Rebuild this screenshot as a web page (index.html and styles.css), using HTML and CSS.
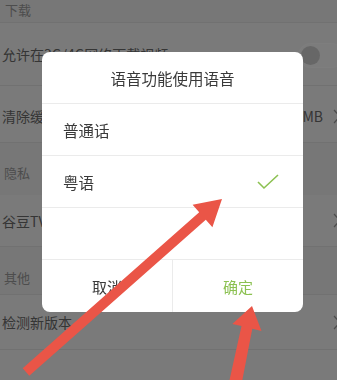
FILE: index.html
```html
<!DOCTYPE html>
<html lang="zh-CN">
<head>
  <meta charset="UTF-8">
  <meta name="viewport" content="width=device-width, initial-scale=1.0">
  <title>语音设置</title>
  <link rel="stylesheet" href="styles.css">
</head>
<body>
  <div class="settings">
    <div class="group-title group-first">下载</div>
    <div class="item item-tall">
      <span>允许在3G/4G网络下载视频</span>
      <span class="switch"><i></i></span>
    </div>
    <div class="item item-cache">
      <span>清除缓存</span>
      <span class="extra">23.6MB
        <svg class="chevron" viewBox="0 0 8 15"><polyline points="1,1 7,7.5 1,14" /></svg>
      </span>
    </div>
    <div class="group-title group-privacy">隐私</div>
    <div class="item">
      <span>谷豆TV隐私协议</span>
      <svg class="chevron" viewBox="0 0 8 15"><polyline points="1,1 7,7.5 1,14" /></svg>
    </div>
    <div class="group-title group-other">其他</div>
    <div class="item item-update">
      <span>检测新版本</span>
      <svg class="chevron" viewBox="0 0 8 15"><polyline points="1,1 7,7.5 1,14" /></svg>
    </div>
    <div class="item item-last"></div>
  </div>

  <div class="mask">
    <div class="dialog">
      <div class="dialog-title">语音功能使用语音</div>
      <div class="option">普通话</div>
      <div class="option">
        <span>粤语</span>
        <svg class="check" viewBox="0 0 22 16"><polyline points="1,8 7,14 21,1" /></svg>
      </div>
      <div class="option"></div>
      <div class="actions">
        <div class="btn">取消</div>
        <div class="btn btn-ok">确定</div>
      </div>
    </div>
  </div>

  <svg class="arrows" viewBox="0 0 337 380">
    <polygon points="22.7,368.2 199.2,212.2 192.6,204.7 222,199 212.4,227.3 205.8,219.8 29.3,375.8" />
    <polygon points="228.2,386 241.5,326.1 232.3,323.9 252,306 261.5,330.9 252.3,328.7 240.8,388" />
  </svg>
</body>
</html>
```

FILE: styles.css
```css
body {
  margin: 0;
  overflow: hidden;
  font-family: "Noto Sans CJK SC", "Noto Sans", sans-serif;
  background: #f5f5f5;
}

.settings {
  width: 346px;
  color: #6a6a6a;
}

.group-title {
  box-sizing: border-box;
  display: flex;
  align-items: flex-end;
  padding: 0 0 12px 4px;
  font-size: 13px;
  color: #9a9a9a;
  background: #eeeeee;
  border-bottom: 1px solid #e2e2e2;
}
.group-first {
  height: 23px;
  align-items: flex-start;
  padding: 1px 0 0 5px;
  line-height: 17px;
}
.group-privacy {
  height: 52px;
  padding-bottom: 13px;
  border-bottom: none;
}
.group-other {
  height: 48px;
  padding-bottom: 7px;
}

.item {
  box-sizing: border-box;
  height: 52px;
  display: flex;
  align-items: center;
  justify-content: space-between;
  padding: 0 5px 0 2px;
  font-size: 14px;
  background: #f5f5f5;
  border-bottom: 1px solid #e2e2e2;
}
.item-tall {
  height: 63px;
}
.item-cache {
  height: 57px;
  padding-top: 4px;
}
.item-update {
  height: 55px;
}
.item-last {
  height: 40px;
  border-bottom: none;
}

.extra {
  display: flex;
  align-items: center;
  gap: 10px;
}

.chevron {
  width: 8px;
  height: 15px;
  fill: none;
  stroke: #9a9a9a;
  stroke-width: 1.2;
}

.switch {
  box-sizing: border-box;
  width: 46px;
  height: 25px;
  margin: 2px -3px 0 0;
  border: 1px solid #fdfdfd;
  border-radius: 13px;
  background: #f8f8f8;
  display: flex;
  align-items: center;
  padding-left: 2px;
}
.switch i {
  width: 19px;
  height: 19px;
  border-radius: 50%;
  background: #cfcfcf;
}

.mask {
  position: fixed;
  inset: 0;
  background: rgba(0, 0, 0, .5);
}

.dialog {
  width: 261px;
  margin: 52px 0 0 42px;
  background: #fff;
  border-radius: 8px;
  overflow: hidden;
  color: #3a3a3a;
}

.dialog-title {
  box-sizing: border-box;
  height: 52px;
  display: flex;
  align-items: center;
  justify-content: center;
  font-size: 15.5px;
  border-bottom: 1px solid #ebebeb;
}

.option {
  box-sizing: border-box;
  height: 52px;
  display: flex;
  align-items: center;
  justify-content: space-between;
  padding: 0 24px 0 21px;
  font-size: 15.5px;
  border-bottom: 1px solid #ebebeb;
}

.check {
  width: 22px;
  height: 16px;
  fill: none;
  stroke: #8cc152;
  stroke-width: 1.6;
}

.actions {
  display: flex;
  height: 52px;
}
.btn {
  flex: 1;
  display: flex;
  align-items: center;
  justify-content: center;
  font-size: 15px;
}
.btn-ok {
  color: #8cc152;
  border-left: 1px solid #ebebeb;
}

.arrows {
  position: fixed;
  left: 0;
  top: 0;
  width: 337px;
  height: 380px;
  fill: #ea5547;
  pointer-events: none;
}
```
